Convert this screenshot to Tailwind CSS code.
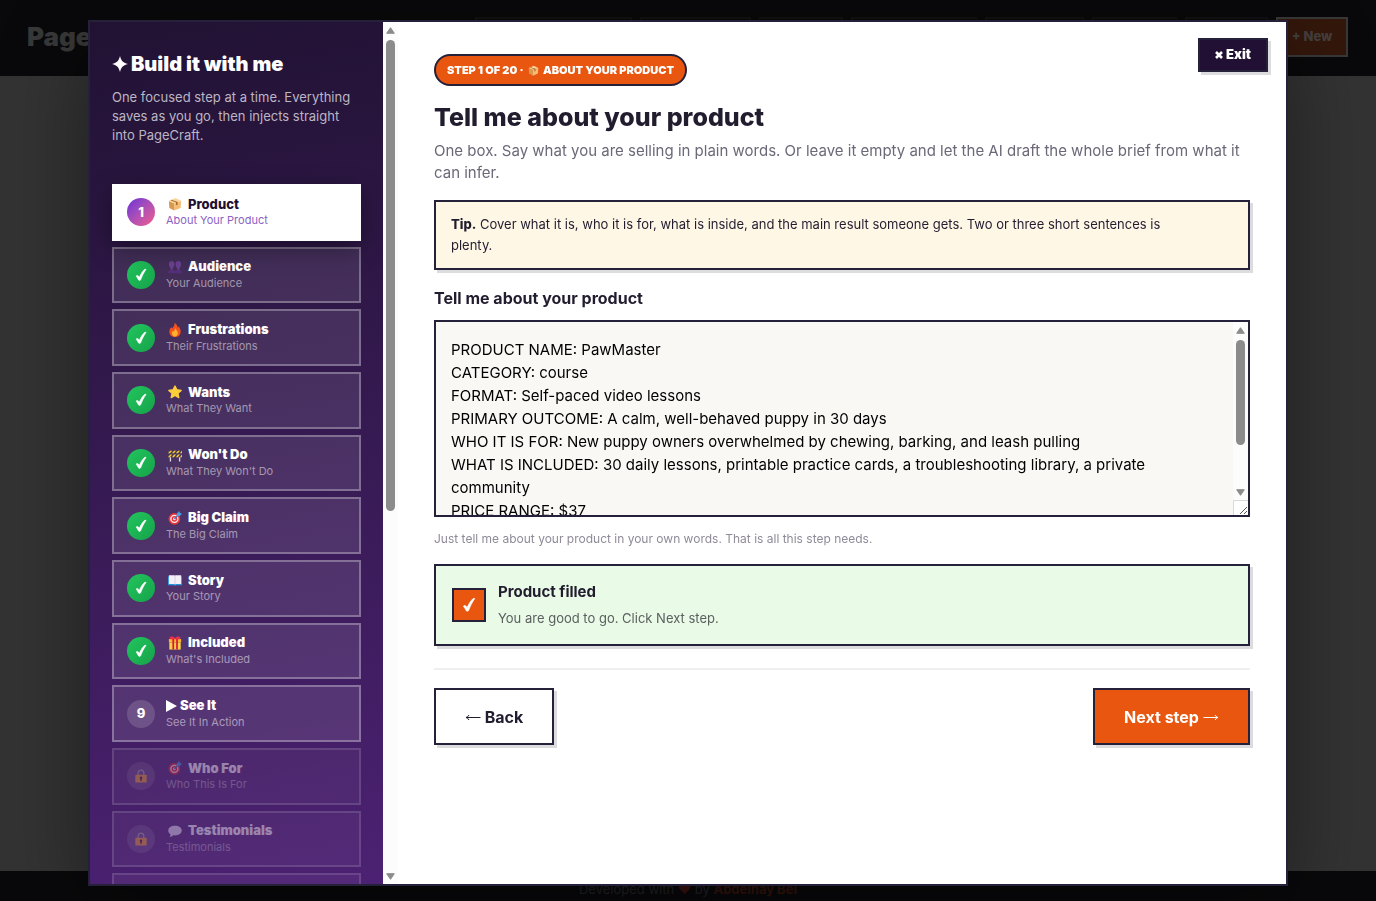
<!DOCTYPE html>
<html lang="en">
<head>
<meta charset="utf-8">
<meta name="viewport" content="width=device-width, initial-scale=1">
<title>Build it with me</title>
<script src="https://cdn.jsdelivr.net/npm/@tailwindcss/browser@4"></script>
</head>
<body class="h-screen overflow-hidden bg-[#333333] font-['Inter',sans-serif] text-[#211c2e]">

<svg class="hidden" aria-hidden="true">
  <symbol id="check" viewBox="0 0 16 16"><path fill="currentColor" stroke="currentColor" stroke-width=".7" stroke-linejoin="round" d="M2.400 9.200c.8-1 2.100-.9 2.800.1l.9 1.400C7.600 7.200 9.500 4 11.900 1.800c.6-.5 1.500-.5 1.900-.2C11.400 4.900 9.200 9.100 7.600 13.500c-.3.8-1.900.9-2.400.2-.8-1.600-1.600-3.100-2.800-4.500z"/></symbol>
  <symbol id="box" viewBox="0 0 16 16"><path fill="#d99a50" d="M1 4.500 7 7v8.500L1.500 12.500z"/><path fill="#f3bd76" d="M7 7l8-2.800-.6 8.300L7 15.500z"/><path fill="#fbd59c" d="M1 4.500 8.500 1 15 4.200 7 7z"/><path fill="#a8692f" d="M4 3.200 11 5.600v3.200l-1.800.7V6.300L2.700 3.800z"/></symbol>
  <symbol id="people" viewBox="0 0 16 16"><path fill="#6b3f92" d="M1 4.500C1 2.300 2.400 1 4.200 1s3.200 1.300 3.200 3.500S6 9 5.300 9.700v1.500L4.200 12l-1.100-.8V9.700C2.300 9 1 6.700 1 4.500zM8.600 4.500C8.600 2.300 10 1 11.800 1S15 2.300 15 4.500s-1.400 4.500-2.100 5.200v1.500l-1.100.8-1.100-.8V9.700c-.8-.7-2.100-3-2.100-5.200z"/><path fill="#55307a" d="M0 15c0-2.500 1.600-3.800 4.200-3.800 1.700 0 3 .5 3.800 1.500.8-1 2.100-1.500 3.800-1.500 2.600 0 4.200 1.300 4.200 3.800z"/></symbol>
  <symbol id="fire" viewBox="0 0 16 16"><path fill="#f4511e" d="M7.500 0c3.200 1.700 3 4 4 5.300.4-.4.6-.9.600-1.500 1.500 2 2.400 4.200 2.400 6.200C14.500 13.500 12 16 8 16s-6.500-2.500-6.500-6c0-2.500 1.300-4 2.400-5.500.2 1 .5 1.500 1 1.800C5.800 4.500 7.800 3 7.500 0z"/><path fill="#fbb12f" d="M8.300 5.500c.2 2 2.900 3.300 2.900 6.300 0 2.200-1.400 3.700-3.200 3.700s-3.500-1.300-3.500-3.600c0-1.300.6-2.300 1.200-3 .2.600.5.900.9 1.100.7-1.300 1.700-2.300 1.700-4.500z"/></symbol>
  <symbol id="star" viewBox="0 0 16 16"><path fill="#fdcf3b" stroke="#fdcf3b" stroke-width="1.600" stroke-linejoin="round" d="M8 1.200l2.100 4.300 4.900.7-3.600 3.300.9 4.900L8 12l-4.300 2.400.9-4.900L1 6.200l4.900-.7z"/></symbol>
  <symbol id="barrier" viewBox="0 0 16 16"><path fill="#dcd8e2" d="M2 9h1.500v6.500H2zM12.500 9H14v6.500h-1.500z"/><path fill="#4a4252" d="M0 3h16v3H0zM0 7.500h16v3H0z"/><path fill="#fcc838" d="M0 6l2.500-3h2.200L2.200 6zM4.500 6 7 3h2.200L6.700 6zM9 6l2.500-3h2.200l-2.500 3zM13.500 6 16 3v3zM0 10.500l2.500-3h2.200l-2.500 3zM4.500 10.500l2.500-3h2.200l-2.500 3zM9 10.500l2.500-3h2.200l-2.500 3zM13.500 10.500l2.500-3v3z"/></symbol>
  <symbol id="target" viewBox="0 0 16 16"><circle cx="7.300" cy="9" r="6.700" fill="#e8343a"/><circle cx="7.300" cy="9" r="4.800" fill="#f7edf2"/><circle cx="7.300" cy="9" r="3.200" fill="#e8343a"/><circle cx="7.300" cy="9" r="1.500" fill="#f7edf2"/><path stroke="#2f77c9" stroke-width="1.400" d="M7.300 9 13 3.500"/><path fill="#43a6ee" d="M10 3l2.800-3 .7 2.300L16 3l-3 3-3-.2z"/></symbol>
  <symbol id="book" viewBox="0 0 16 16"><path fill="#2592dd" d="M0 4h16v10H9l-1 .8L7 14H0z"/><path fill="#f3eff9" d="M1 2.500h6.300c.3 0 .7.300.7.600 0-.3.400-.6.700-.600H15v10H8.700l-.7.700-.7-.7H1z"/><path stroke="#c9c2dc" stroke-width=".8" d="M8 3v10"/></symbol>
  <symbol id="gift" viewBox="0 0 16 16"><path fill="#fcb72c" d="M1 3.500h14v4H1z"/><path fill="#fbd045" d="M1.500 7.500h13v8h-13z"/><path fill="#d9173f" d="M5 3h2v12.500H5zM9.300 3h2v12.500h-2z"/><path fill="#ee2f4b" d="M1.800 1.500C3 0 6.500 0 8 2.500 9.500 0 13 0 14.200 1.500l-.8 2.300H2.600z"/></symbol>
  <symbol id="lock" viewBox="0 0 16 16"><path fill="none" stroke="#a6a0ad" stroke-width="1.600" d="M4.800 7V4.600C4.800 2.600 6 1.400 8 1.400s3.200 1.200 3.200 3.200V7"/><rect x="1.500" y="6.500" width="13" height="9" rx="1" fill="#f2a63a"/><path fill="#4b2a3f" d="M8 8.500a1.500 1.500 0 0 1 .8 2.700v2.300H7.200v-2.300A1.500 1.500 0 0 1 8 8.500z"/></symbol>
  <symbol id="bubble" viewBox="0 0 16 16"><path fill="#e9e2f3" d="M8 2c4.500 0 7.700 2.200 7.700 5.500S12.500 13 8 13c-.8 0-1.500-.1-2.200-.2C5 14 3.500 14.700 1.800 14.700c.8-.8 1.100-1.700 1-2.800C1.200 10.900.3 9.300.3 7.500.3 4.200 3.500 2 8 2z"/></symbol>
</svg>

<!-- Page behind the dialog -->
<div class="flex h-full flex-col" aria-hidden="true">
  <div class="flex h-[76px] shrink-0 items-start justify-between bg-[#09090b] pt-[17px] pr-7 pl-[27px]">
    <div class="pt-0.5 text-[26px] leading-9 font-black text-[#383838]">PageCraft</div>
    <div class="flex gap-2">
      <div class="h-10 w-[157px] border-2 border-[#111113]"></div>
      <div class="h-10 w-[111px] border-2 border-[#111113]"></div>
      <div class="h-10 w-[84px] border-2 border-[#111113]"></div>
      <div class="h-10 w-[126px] border-2 border-[#111113]"></div>
      <div class="h-10 w-[99px] border-2 border-[#111113]"></div>
      <div class="h-10 w-[85px] border-2 border-[#111113]"></div>
      <div class="h-10 w-[83px] border-2 border-[#111113]"></div>
      <div class="flex h-10 w-[72px] items-center justify-center border-2 border-[#383838] bg-[#34170b] text-[13px] font-extrabold text-[#44403e]">+ New</div>
    </div>
  </div>
  <div class="grow"></div>
  <div class="h-[30px] shrink-0 bg-[#09090b] pt-2 text-center text-[13px] leading-5 text-[#222222]">Developed with <span class="text-[#3a1210]">♥</span> by <span class="font-bold text-[#33140a]">Abdelhay Bel</span></div>
</div>

<!-- Dialog -->
<div class="fixed inset-0 flex justify-center px-5 pt-5 pb-[15px]">
  <div role="dialog" aria-label="Build it with me" class="relative flex w-full max-w-[1200px] overflow-hidden border-2 border-[#26213a] bg-white shadow-[0_24px_80px_rgba(0,0,0,0.4)]">

    <aside class="w-[293px] shrink-0 overflow-hidden bg-linear-170 from-[#211233] to-[#4c2173] px-[22px] pt-7">
      <h2 class="flex items-center gap-[3px] text-[20px] leading-7 font-black whitespace-nowrap text-white">
        <svg class="size-4 shrink-0" viewBox="0 0 16 16" aria-hidden="true"><path fill="currentColor" d="M8 0c1.100 4.400 2.600 6.700 8 8-5.400 1.300-6.900 3.600-8 8-1.100-4.400-2.600-6.700-8-8 5.400-1.300 6.900-3.600 8-8z"/></svg>
        Build it with me
      </h2>
      <p class="mt-2.5 text-[13px] leading-[19px] text-[#bcb6c4]">One focused step at a time. Everything<br>saves as you go, then injects straight<br>into PageCraft.</p>

      <nav aria-label="Steps" class="mt-[39px] grid h-[746px] auto-rows-fr gap-1.5">
        <button class="relative z-10 flex items-center gap-[11px] bg-white px-[15px] text-left shadow-[0_8px_24px_rgba(0,0,0,0.35)]">
          <span class="flex size-7 shrink-0 items-center justify-center rounded-full bg-linear-135 from-[#6d28d9] to-[#f5588a] text-[13px] font-extrabold text-white">1</span>
          <span><span class="flex h-4 items-center gap-1.5 text-[13px] font-extrabold text-[#1f1033]"><svg class="ml-0.5 size-3.5"><use href="#box"/></svg>Product</span><span class="block text-[11px] leading-4 text-[#8a63c4]">About Your Product</span></span>
        </button>
        <button class="flex items-center gap-[11px] border-2 border-white/30 bg-white/10 px-[13px] text-left">
          <span class="flex size-7 shrink-0 items-center justify-center rounded-full bg-linear-135 from-[#22c55e] to-[#16a34a] text-white"><svg class="size-3.5"><use href="#check"/></svg></span>
          <span><span class="flex h-4 items-center gap-1.5 text-[13px] font-black text-white"><svg class="ml-0.5 size-3.5"><use href="#people"/></svg>Audience</span><span class="block text-[11px] leading-4 text-white/50">Your Audience</span></span>
        </button>
        <button class="flex items-center gap-[11px] border-2 border-white/30 bg-white/10 px-[13px] text-left">
          <span class="flex size-7 shrink-0 items-center justify-center rounded-full bg-linear-135 from-[#22c55e] to-[#16a34a] text-white"><svg class="size-3.5"><use href="#check"/></svg></span>
          <span><span class="flex h-4 items-center gap-1.5 text-[13px] font-black text-white"><svg class="ml-0.5 size-3.5"><use href="#fire"/></svg>Frustrations</span><span class="block text-[11px] leading-4 text-white/50">Their Frustrations</span></span>
        </button>
        <button class="flex items-center gap-[11px] border-2 border-white/30 bg-white/10 px-[13px] text-left">
          <span class="flex size-7 shrink-0 items-center justify-center rounded-full bg-linear-135 from-[#22c55e] to-[#16a34a] text-white"><svg class="size-3.5"><use href="#check"/></svg></span>
          <span><span class="flex h-4 items-center gap-1.5 text-[13px] font-black text-white"><svg class="ml-0.5 size-3.5"><use href="#star"/></svg>Wants</span><span class="block text-[11px] leading-4 text-white/50">What They Want</span></span>
        </button>
        <button class="flex items-center gap-[11px] border-2 border-white/30 bg-white/10 px-[13px] text-left">
          <span class="flex size-7 shrink-0 items-center justify-center rounded-full bg-linear-135 from-[#22c55e] to-[#16a34a] text-white"><svg class="size-3.5"><use href="#check"/></svg></span>
          <span><span class="flex h-4 items-center gap-1.5 text-[13px] font-black text-white"><svg class="ml-0.5 size-3.5"><use href="#barrier"/></svg>Won't Do</span><span class="block text-[11px] leading-4 text-white/50">What They Won't Do</span></span>
        </button>
        <button class="flex items-center gap-[11px] border-2 border-white/30 bg-white/10 px-[13px] text-left">
          <span class="flex size-7 shrink-0 items-center justify-center rounded-full bg-linear-135 from-[#22c55e] to-[#16a34a] text-white"><svg class="size-3.5"><use href="#check"/></svg></span>
          <span><span class="flex h-4 items-center gap-1.5 text-[13px] font-black text-white"><svg class="ml-0.5 size-3.5"><use href="#target"/></svg>Big Claim</span><span class="block text-[11px] leading-4 text-white/50">The Big Claim</span></span>
        </button>
        <button class="flex items-center gap-[11px] border-2 border-white/30 bg-white/10 px-[13px] text-left">
          <span class="flex size-7 shrink-0 items-center justify-center rounded-full bg-linear-135 from-[#22c55e] to-[#16a34a] text-white"><svg class="size-3.5"><use href="#check"/></svg></span>
          <span><span class="flex h-4 items-center gap-1.5 text-[13px] font-black text-white"><svg class="ml-0.5 size-3.5"><use href="#book"/></svg>Story</span><span class="block text-[11px] leading-4 text-white/50">Your Story</span></span>
        </button>
        <button class="flex items-center gap-[11px] border-2 border-white/30 bg-white/10 px-[13px] text-left">
          <span class="flex size-7 shrink-0 items-center justify-center rounded-full bg-linear-135 from-[#22c55e] to-[#16a34a] text-white"><svg class="size-3.5"><use href="#check"/></svg></span>
          <span><span class="flex h-4 items-center gap-1.5 text-[13px] font-black text-white"><svg class="ml-0.5 size-3.5"><use href="#gift"/></svg>Included</span><span class="block text-[11px] leading-4 text-white/50">What's Included</span></span>
        </button>
        <button class="flex items-center gap-[11px] border-2 border-white/30 bg-white/10 px-[13px] text-left">
          <span class="flex size-7 shrink-0 items-center justify-center rounded-full bg-white/15 text-[13px] font-extrabold text-white">9</span>
          <span><span class="flex h-4 items-center gap-[3px] text-[13px] font-black text-white"><svg class="h-3 w-[11px]" viewBox="0 0 11 12"><path fill="currentColor" d="M0 0l11 6-11 6z"/></svg>See It</span><span class="block text-[11px] leading-4 text-white/50">See It In Action</span></span>
        </button>
        <button disabled class="flex items-center gap-[11px] border-2 border-white/30 bg-white/10 px-[13px] text-left opacity-45">
          <span class="flex size-7 shrink-0 items-center justify-center rounded-full bg-white/15"><svg class="size-3.5"><use href="#lock"/></svg></span>
          <span><span class="flex h-4 items-center gap-1.5 text-[13px] font-black text-white"><svg class="ml-0.5 size-3.5"><use href="#target"/></svg>Who For</span><span class="block text-[11px] leading-4 text-white/50">Who This Is For</span></span>
        </button>
        <button disabled class="flex items-center gap-[11px] border-2 border-white/30 bg-white/10 px-[13px] text-left opacity-45">
          <span class="flex size-7 shrink-0 items-center justify-center rounded-full bg-white/15"><svg class="size-3.5"><use href="#lock"/></svg></span>
          <span><span class="flex h-4 items-center gap-1.5 text-[13px] font-black text-white"><svg class="ml-0.5 size-3.5"><use href="#bubble"/></svg>Testimonials</span><span class="block text-[11px] leading-4 text-white/50">Testimonials</span></span>
        </button>
        <button disabled aria-label="Next locked step" class="border-2 border-white/30 bg-white/10 opacity-45"></button>
      </nav>
    </aside>

    <!-- Sidebar scrollbar -->
    <div class="flex w-[15px] shrink-0 flex-col items-center bg-[#fcfcfc] pt-[5px] pb-[4px]" aria-hidden="true">
      <svg class="h-[7px] w-[9px] shrink-0" viewBox="0 0 9 7"><path fill="#8b8b8b" stroke="#8b8b8b" stroke-linejoin="round" d="M4.500.7 8.300 6.300H.7z"/></svg>
      <div class="mt-1.5 h-[471px] w-[9px] rounded-full bg-[#8b8b8b]"></div>
      <div class="grow"></div>
      <svg class="h-[7px] w-[9px] shrink-0" viewBox="0 0 9 7"><path fill="#8b8b8b" stroke="#8b8b8b" stroke-linejoin="round" d="M4.500 6.300.7.700h7.600z"/></svg>
    </div>

    <main class="min-w-0 grow px-9 pt-8">
      <div class="flex">
        <div class="flex h-8 items-center rounded-full border-2 border-[#26213a] bg-[#e8560f] px-[11px] text-[11px] font-black whitespace-pre text-white">STEP 1 OF 20 · <svg class="mx-0.5 size-[11px]"><use href="#box"/></svg> ABOUT YOUR PRODUCT</div>
      </div>
      <h1 class="mt-4 text-[25px] leading-[30px] font-extrabold">Tell me about your product</h1>
      <p class="mt-2 text-[15px] leading-[22px] text-[#6c6878]">One box. Say what you are selling in plain words. Or leave it empty and let the AI draft the whole brief from what it can infer.</p>

      <div class="mt-4 border-2 border-[#26213a] bg-[#fff7e6] px-[15px] py-3 text-[13px] leading-[21px] shadow-[3px_3px_0_#dcdcde]"><strong class="font-extrabold">Tip.</strong> Cover what it is, who it is for, what is inside, and the main result someone gets. Two or three short sentences is<br>plenty.</div>

      <label for="product" class="mt-4 block text-[16px] leading-6 font-bold">Tell me about your product</label>
      <div class="mt-2.5 flex h-[197px] border-2 border-[#26213a] bg-[#faf8f5]">
        <textarea id="product" class="min-w-0 grow resize-none overflow-hidden px-[15px] pt-4 text-[15px] leading-[23px] text-black outline-none">PRODUCT NAME: PawMaster
CATEGORY: course
FORMAT: Self-paced video lessons
PRIMARY OUTCOME: A calm, well-behaved puppy in 30 days
WHO IT IS FOR: New puppy owners overwhelmed by chewing, barking, and leash pulling
WHAT IS INCLUDED: 30 daily lessons, printable practice cards, a troubleshooting library, a private community
PRICE RANGE: $37</textarea>
        <div class="flex w-[15px] shrink-0 flex-col items-center bg-[#fcfcfc] pt-[5px]" aria-hidden="true">
          <svg class="h-[7px] w-[9px] shrink-0" viewBox="0 0 9 7"><path fill="#8b8b8b" stroke="#8b8b8b" stroke-linejoin="round" d="M4.500.7 8.300 6.300H.7z"/></svg>
          <div class="mt-1.5 h-[105px] w-[9px] rounded-full bg-[#8b8b8b]"></div>
          <div class="grow"></div>
          <svg class="h-[7px] w-[9px] shrink-0" viewBox="0 0 9 7"><path fill="#8b8b8b" stroke="#8b8b8b" stroke-linejoin="round" d="M4.500 6.300.7.700h7.600z"/></svg>
          <svg class="mt-1 size-[15px] shrink-0" viewBox="0 0 15 15"><path fill="#fff" stroke="#d9d9d9" d="M.5 15V.5H15"/><path stroke="#555" d="M7 14l7-7M11 14l3-3"/></svg>
        </div>
      </div>
      <p class="mt-3 text-[12px] leading-5 text-[#8f8b99]">Just tell me about your product in your own words. That is all this step needs.</p>

      <div class="mt-[15px] flex h-[82px] items-center gap-3 border-2 border-[#26213a] bg-[#e9fae6] px-4 shadow-[3px_3px_0_#dcdcde]">
        <div class="flex size-[34px] shrink-0 items-center justify-center border-2 border-[#26213a] bg-[#e8560f] text-white"><svg class="size-4"><use href="#check"/></svg></div>
        <div>
          <div class="text-[15px] leading-[26px] font-bold">Product filled</div>
          <div class="text-[13px] leading-[26px] text-[#5c6061]">You are good to go. Click Next step.</div>
        </div>
      </div>

      <div class="mt-[22px] flex justify-between border-t-2 border-[#efeff0] pt-[18px]">
        <button class="flex h-[57px] w-[120px] items-center justify-center gap-1 border-2 border-[#26213a] bg-white text-[16px] font-bold shadow-[3px_3px_0_#dcdcde]"><svg class="h-2 w-4" viewBox="0 0 16 8" aria-hidden="true"><path fill="none" stroke="currentColor" d="M15.500 4.500H1M4 2Q3 4 1 4.500 3 5 4 7"/></svg>Back</button>
        <button class="flex h-[57px] w-[157px] items-center justify-center gap-1 border-2 border-[#26213a] bg-[#e8560f] text-[16px] font-bold text-white shadow-[3px_3px_0_#dcdcde]">Next step<svg class="h-2 w-4" viewBox="0 0 16 8" aria-hidden="true"><path fill="none" stroke="currentColor" d="M.5 4.500H15M12 2Q13 4 15 4.500 13 5 12 7"/></svg></button>
      </div>
    </main>

    <button class="absolute top-4 right-[18px] flex h-[34px] w-[70px] items-center justify-center gap-[3px] border-2 border-[#26213a] bg-[#211033] text-[13px] font-black text-white shadow-[3px_3px_0_#dcdcde]"><svg class="size-2" viewBox="0 0 8 8" aria-hidden="true"><path stroke="currentColor" stroke-width="2.600" d="M1 1l6 6M7 1 1 7"/></svg>Exit</button>
  </div>
</div>
</body>
</html>
